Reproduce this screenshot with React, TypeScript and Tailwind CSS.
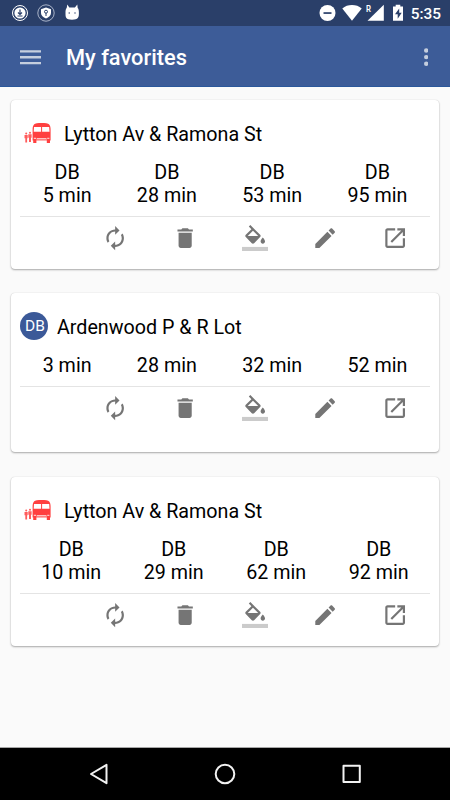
import type { ReactNode } from "react";
import clsx from "clsx";

type Arrival = { line?: string; minutes: number };

type Favorite = {
  id: number;
  stop: string;
  badge?: string;
  arrivals: Arrival[];
  className: string;
};

const favorites: Favorite[] = [
  {
    id: 1,
    stop: "Lytton Av & Ramona St",
    arrivals: [
      { line: "DB", minutes: 5 },
      { line: "DB", minutes: 28 },
      { line: "DB", minutes: 53 },
      { line: "DB", minutes: 95 },
    ],
    className: "h-[169px]",
  },
  {
    id: 2,
    stop: "Ardenwood P & R Lot",
    badge: "DB",
    arrivals: [{ minutes: 3 }, { minutes: 28 }, { minutes: 32 }, { minutes: 52 }],
    className: "h-[159px]",
  },
  {
    id: 3,
    stop: "Lytton Av & Ramona St",
    arrivals: [
      { line: "DB", minutes: 10 },
      { line: "DB", minutes: 29 },
      { line: "DB", minutes: 62 },
      { line: "DB", minutes: 92 },
    ],
    className: "h-[169px]",
  },
];

const actions = [
  {
    label: "Refresh",
    path: "M12 6v3l4-4-4-4v3c-4.42 0-8 3.58-8 8 0 1.57.46 3.03 1.24 4.26L6.7 14.8c-.45-.83-.7-1.79-.7-2.8 0-3.31 2.69-6 6-6zm6.76 1.74L17.3 9.2c.44.84.7 1.79.7 2.8 0 3.31-2.69 6-6 6v-3l-4 4 4 4v-3c4.42 0 8-3.58 8-8 0-1.57-.46-3.03-1.24-4.26z",
  },
  {
    label: "Delete",
    path: "M6 19c0 1.1.9 2 2 2h8c1.1 0 2-.9 2-2V7H6v12zM19 4h-3.5l-1-1h-5l-1 1H5v2h14V4z",
  },
  {
    label: "Color",
    path: "M16.56 8.94L7.62 0 6.21 1.41l2.38 2.38-5.15 5.15c-.59.59-.59 1.54 0 2.12l5.5 5.5c.29.29.68.44 1.06.44s.77-.15 1.06-.44l5.5-5.5c.59-.58.59-1.53 0-2.12zM5.21 10L10 5.21 14.79 10H5.21zM19 11.5s-2 2.17-2 3.5c0 1.1.9 2 2 2s2-.9 2-2c0-1.33-2-3.5-2-3.5z",
    underline: true,
  },
  {
    label: "Edit",
    path: "M3 17.25V21h3.75L17.81 9.94l-3.75-3.75L3 17.25zM20.71 7.04c.39-.39.39-1.02 0-1.41l-2.34-2.34c-.39-.39-1.02-.39-1.41 0l-1.83 1.83 3.75 3.75 1.83-1.83z",
  },
  {
    label: "Open",
    path: "M19 19H5V5h7V3H5c-1.11 0-2 .9-2 2v14c0 1.1.89 2 2 2h14c1.1 0 2-.9 2-2v-7h-2v7zM14 3v2h3.59l-9.83 9.83 1.41 1.41L19 6.41V10h2V3h-7z",
  },
];

function BusIcon() {
  return (
    <svg viewBox="0 0 27 21" className="h-[21px] w-[27px] shrink-0" fill="#ff4040">
      <path
        fillRule="evenodd"
        d="M10 1.600C11 .4 14 0 17.600 0s6.600.4 7.600 1.600c.9 1 1.400 2.700 1.400 5V17.600h-.6V20h-3.200v-2.400H12.400V20H9.200v-2.400h-.6V6.600c0-2.300.5-4 1.400-5zM10 4l-.3 4.700h7.400V4zM18.100 4v4.700h7.400L25.200 4z"
      />
      <path d="M9.800 14.700h2.200v1.300H9.800zM23.200 14.700h2.200v1.300h-2.200zM12.700 15h9.800v2.600h-9.800z" fill="#ffc4c4" />
      <path d="M13 16h9.200v.8H13z" fill="#ff7070" />
      <g opacity=".85">
        <circle cx="2.200" cy="10.400" r="1" />
        <circle cx="6" cy="9.700" r="1" />
        <path d="M.5 12h3.200v3.200h-.6v4.400H1.300v-4.400H.5zM4.300 11.200h3.300v3.600H7v4.200H5v-4.200h-.7z" />
      </g>
    </svg>
  );
}

function ActionBar() {
  return (
    <div className="flex justify-end border-t border-[#e4e4e4] pt-2">
      {actions.map((action) => (
        <button key={action.label} aria-label={action.label} className="flex w-[70px] justify-center">
          <svg viewBox="0 0 24 24" className="size-[26.3px]" fill="#757575">
            <path d={action.path} />
            {action.underline && <path d="M0 20h24v4H0z" fill="#cbcbcb" />}
          </svg>
        </button>
      ))}
    </div>
  );
}

function FavoriteCard({ favorite }: { favorite: Favorite }) {
  return (
    <section
      className={clsx(
        "rounded-[4px] bg-white px-[9px] shadow-[0_1px_2px_rgba(0,0,0,0.32),0_0_1px_rgba(0,0,0,0.16)]",
        favorite.className,
      )}
    >
      <div className={clsx("flex items-center pt-[19px]", favorite.badge ? "h-[49px]" : "h-[50px]")}>
        {favorite.badge ? (
          <span className="mr-[9px] mb-[2px] flex size-[28px] items-center justify-center rounded-full bg-[#3b5998] pt-px pl-[2px] text-[15.5px] text-white">
            {favorite.badge}
          </span>
        ) : (
          <span className="mr-[13px] mb-px ml-[4px]">
            <BusIcon />
          </span>
        )}
        <h2 className="text-[19.7px] leading-[23px]">{favorite.stop}</h2>
      </div>
      <div
        className={clsx(
          "mb-[9px] flex justify-around text-center text-[19.7px] leading-[23px]",
          favorite.badge ? "mt-[12px]" : "mt-[11px]",
        )}
      >
        {favorite.arrivals.map((arrival) => (
          <div key={arrival.minutes}>
            {arrival.line && <div>{arrival.line}</div>}
            <div>{arrival.minutes} min</div>
          </div>
        ))}
      </div>
      <ActionBar />
    </section>
  );
}

function StatusBar() {
  return (
    <div className="flex h-[26px] items-center justify-between bg-[#2a3f69] pr-[9px] pl-[11px]">
      <svg viewBox="0 0 70 20" className="h-5 w-[70px]" fill="none">
        <circle cx="9" cy="10" r="7.500" stroke="#fff" strokeWidth="1" />
        <circle cx="9" cy="10" r="5.600" fill="#fff" />
        <path d="M9 6.500v4.500M7 9.500l2 2 2-2M6.500 13h5" stroke="#2a3f69" strokeWidth="1.200" />
        <circle cx="35" cy="10" r="8.200" stroke="#a9b3c8" strokeWidth="1" />
        <path d="M35 4.500l5 1.700v3.800c0 2.500-2.200 4.400-5 5.600-2.800-1.200-5-3.100-5-5.600V6.200z" fill="#fff" />
        <circle cx="35" cy="8.700" r="1.500" stroke="#2a3f69" />
        <path d="M35 10v3" stroke="#2a3f69" />
        <path
          d="M56.300 1.500l2 2.900h5.600l2.400-2.900.4 3.600c1 1 1.200 2.400 1.200 5 0 4.500-.6 6.600-6.900 6.600s-6.500-2.100-6.500-6.600c0-2.600.2-4 1.200-5z"
          fill="#fff"
        />
        <circle cx="58.200" cy="10" r=".7" fill="#2a3f69" />
        <circle cx="64" cy="10" r=".7" fill="#2a3f69" />
      </svg>
      <div className="flex items-center">
        <svg viewBox="0 0 90 20" className="h-5 w-[90px]" fill="#fff">
          <circle cx="8.500" cy="10" r="8" />
          <path d="M4.500 9.200h8v1.700h-8z" fill="#2a3f69" />
          <path d="M33 17.700L23.300 5.400C26 3.200 29.300 2 33 2s7 1.200 9.700 3.400z" />
          <path d="M48.500 17.700L64.800 1.700v16z" />
          <path d="M74 3.500h2.700V1.800h4.600v1.700H84v14.200H74z" />
          <path d="M80.200 5.500L76 11.200h2.700v4.500l4-5.900h-2.500z" fill="#2a3f69" />
          <text x="47" y="9.200" fontSize="9.500" fontWeight="600" fontFamily="Roboto, sans-serif" textLength="5" lengthAdjust="spacingAndGlyphs">
            R
          </text>
        </svg>
        <span className="ml-[2px] pt-px text-[15.4px] leading-5 font-medium text-white">5:35</span>
      </div>
    </div>
  );
}

function AppBar() {
  return (
    <header className="flex h-[61px] items-center border-b border-[#2b589b] bg-[#3d5c98] pt-px pr-[22px] pl-[20px]">
      <svg viewBox="0 0 21 16" className="h-4 w-[21px]" fill="#c5cede">
        <path d="M0 1.200h21v2.300H0zM0 7.100h21v2.300H0zM0 13h21v2.300H0z" />
      </svg>
      <h1 className="ml-[25px] flex-1 pt-[3px] text-[21.8px] leading-7 font-medium text-white">My favorites</h1>
      <svg viewBox="0 0 4.400 18" className="h-[18px] w-[4.4px]" fill="#c5cede">
        <circle cx="2.200" cy="2.500" r="2.200" />
        <circle cx="2.200" cy="9.100" r="2.200" />
        <circle cx="2.200" cy="15.700" r="2.200" />
      </svg>
    </header>
  );
}

function NavKey({ children }: { children: ReactNode }) {
  return (
    <svg viewBox="0 0 24 24" className="size-6" fill="none" stroke="#f2f2f2" strokeWidth="2" strokeLinejoin="round">
      {children}
    </svg>
  );
}

export default function App() {
  return (
    <div className="flex h-[800px] w-[450px] flex-col overflow-hidden bg-[#fafafa] font-['Roboto',sans-serif] text-black">
      <StatusBar />
      <AppBar />
      <main className="flex flex-1 flex-col gap-[24.5px] px-[11px] pt-[12.5px]">
        {favorites.map((favorite) => (
          <FavoriteCard key={favorite.id} favorite={favorite} />
        ))}
      </main>
      <nav className="flex h-[53px] items-center justify-between border-t border-[#a6a6a6] bg-black px-[86px]">
        <NavKey>
          <path d="M20.500 2.800v18.400L5 12z" />
        </NavKey>
        <NavKey>
          <circle cx="12" cy="12" r="9.300" />
        </NavKey>
        <NavKey>
          <path d="M3.500 3.700h16.300V20H3.500z" />
        </NavKey>
      </nav>
    </div>
  );
}
